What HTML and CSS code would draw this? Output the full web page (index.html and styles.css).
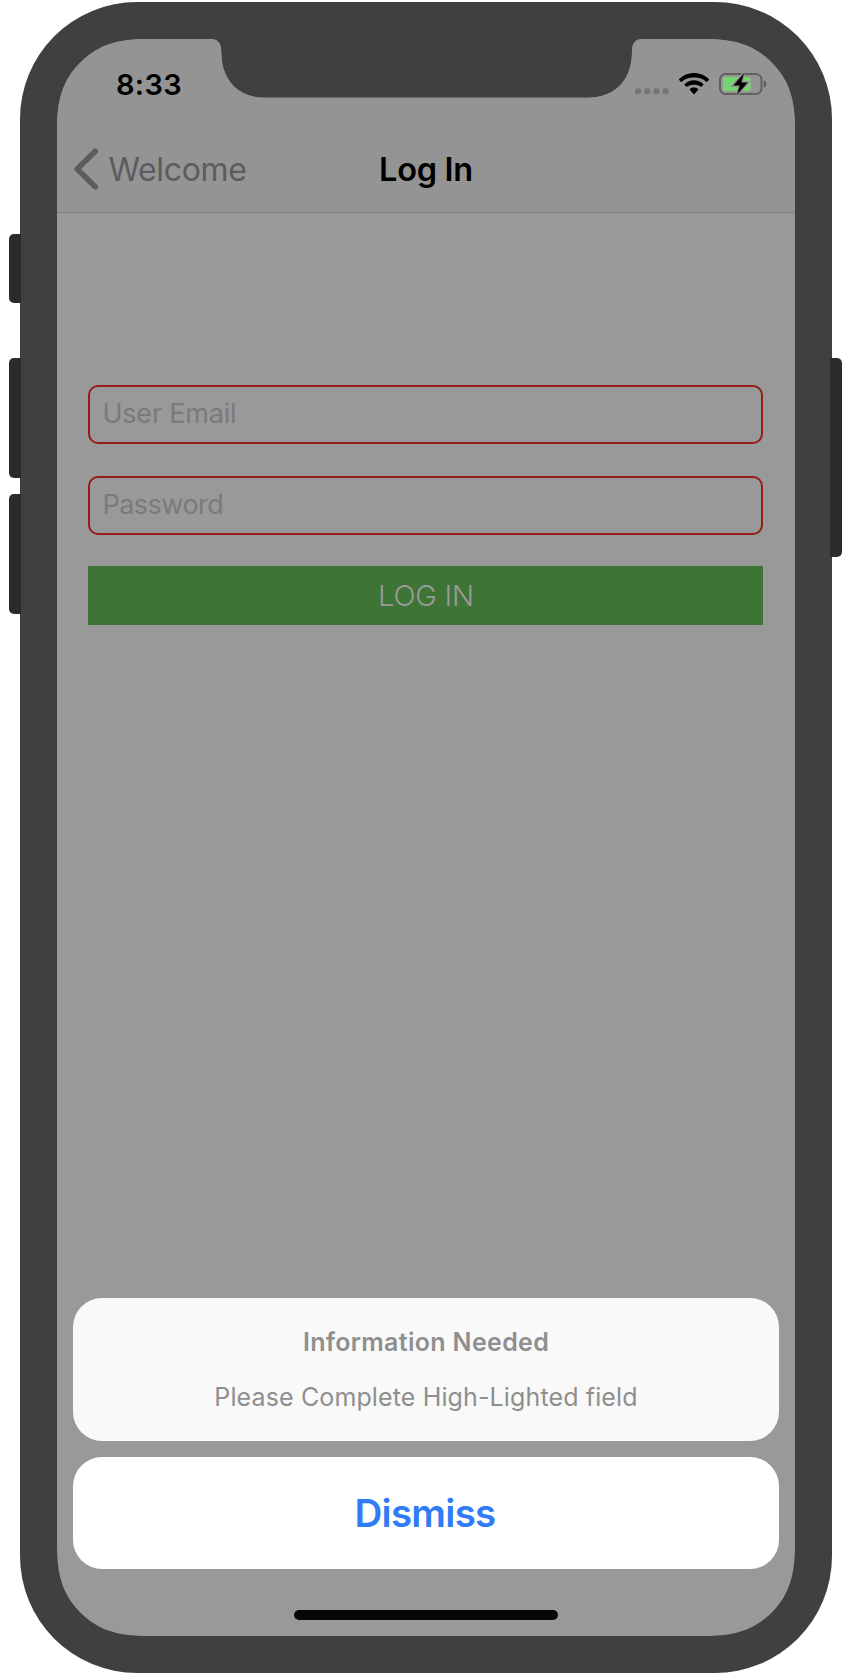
FILE: index.html
```html
<!DOCTYPE html>
<html lang="en">
<head>
<meta charset="utf-8">
<title>Log In</title>
<link rel="stylesheet" href="styles.css">
</head>
<body>
<div class="device">
  <i class="key key-mute"></i>
  <i class="key key-up"></i>
  <i class="key key-down"></i>
  <i class="key key-power"></i>
  <div class="shell">
    <main class="screen">
      <header class="top">
        <div class="status">
          <span class="time">8:33</span>
          <div class="indicators">
            <svg class="signal" width="34" height="7" viewBox="0 0 34 7"><g fill="#767676"><rect x="0" y="0.3" width="6" height="6" rx="2"/><rect x="9.2" y="0.3" width="6" height="6" rx="2"/><rect x="18.4" y="0.3" width="6" height="6" rx="2"/><rect x="27.6" y="0.3" width="6" height="6" rx="2"/></g></svg>
            <svg class="wifi" width="30" height="22" viewBox="0 0 30 22"><path d="M15 0C9.300 0 4 2.200.2 6.100a.7.7 0 0 0 0 1l1.600 1.600a.7.7 0 0 0 1 0A17.500 17.500 0 0 1 15 4.600a17.500 17.500 0 0 1 12.200 4.100.7.7 0 0 0 1 0l1.600-1.600a.7.7 0 0 0 0-1C26 2.200 20.700 0 15 0Z"/><path d="M15 7.200c-3.600 0-6.800 1.400-9.300 3.700a.7.7 0 0 0 0 1l1.700 1.700a.7.7 0 0 0 1 0A9.700 9.700 0 0 1 15 11.800c2.500 0 4.800.6 6.600 1.800a.7.7 0 0 0 1 0l1.700-1.700a.7.7 0 0 0 0-1A13.500 13.500 0 0 0 15 7.200Z"/><path d="M15 14.600c-1.500 0-2.900.5-4 1.400a.7.7 0 0 0 0 1.100l3.500 3.800a.7.7 0 0 0 1 0l3.500-3.800a.7.7 0 0 0 0-1.100 6.300 6.300 0 0 0-4-1.400Z"/></svg>
            <svg class="battery" width="49" height="24" viewBox="0 0 49 24"><rect x="1" y="2" width="41.500" height="20" rx="5.500" fill="none" stroke="#606060" stroke-width="2"/><path d="M44.700 8.200c2 .7 2.800 2 2.800 3.800s-.8 3.100-2.800 3.800Z" fill="#606060"/><rect x="4" y="5" width="27.500" height="14" rx="2.600" fill="#76d572"/><path d="M24.500 2 14.700 13.200h6.300L18.500 22 28.300 10.800H22Z" fill="#959595" stroke="#959595" stroke-width="3.400"/><path d="M24.500 2 14.700 13.200h6.300L18.500 22 28.300 10.800H22Z" stroke="#000" stroke-width=".5"/></svg>
          </div>
        </div>
        <nav class="nav">
          <a class="back"><svg width="26" height="42" viewBox="0 0 26 42"><path d="M22.200 3.200 4.200 21l18 17.800" fill="none" stroke="#5c5c5c" stroke-width="5.600" stroke-linecap="round" stroke-linejoin="round"/></svg><span>Welcome</span></a>
          <h1 class="title">Log In</h1>
        </nav>
      </header>
      <form class="form">
        <div class="field">User Email</div>
        <div class="field field-password">Password</div>
        <div class="submit">LOG IN</div>
      </form>
      <section class="sheet">
        <div class="message">
          <h2>Information Needed</h2>
          <p>Please Complete High-Lighted field</p>
        </div>
        <div class="dismiss">Dismiss</div>
      </section>
      <div class="home"></div>
    </main>
  </div>
</div>
</body>
</html>
```
FILE: styles.css
```css
* { box-sizing: border-box; }
body { margin: 0; background: #fff; font-family: Inter, "Liberation Sans", sans-serif; }
.device { position: relative; width: 852px; height: 1676px; padding: 2px 20px 3px; }
.shell { height: 1671px; padding: 37px; background: #404040; border-radius: 117px; }
.key { position: absolute; left: 9px; width: 12px; background: #2b2b2b; border-radius: 5px 0 0 5px; }
.key-mute { top: 234px; height: 69px; }
.key-up { top: 358px; height: 120px; }
.key-down { top: 494px; height: 120px; }
.key-power { left: 830px; top: 358px; border-radius: 0 5px 5px 0; height: 199px; }
.screen {
  display: flex; flex-direction: column; width: 738px; height: 1597px; background: #999;
  clip-path: path("M0 92C0 72 2 57 9 43C16 29 29 16 43 9C57 2 72 0 92 0H153C161 0 164.300 4 164.300 13C164.300 40 180 58.700 208 58.700H531C559 58.700 575 40 575 13C575 4 578 0 586 0H646C666 0 681 2 695 9C709 16 722 29 729 43C736 57 738 72 738 92V1505C738 1525 736 1540 729 1554C722 1568 709 1581 695 1588C681 1595 666 1597 646 1597H92C72 1597 57 1595 43 1588C29 1581 16 1568 9 1554C2 1540 0 1525 0 1505Z");
}
.top { height: 174px; background: #949494; border-bottom: 1px solid #7f7f7f; }
.status { display: flex; justify-content: space-between; height: 87px; padding: 26px 27px 0 59px; }
.time { font-size: 29px; line-height: 39px; font-weight: 600; letter-spacing: 0.3px; }
.indicators { display: flex; align-items: flex-start; }
.signal { margin: 23px 10px 0 0; }
.wifi { margin: 8px 10px 0 0; }
.battery { margin-top: 7px; }
.nav { display: grid; grid-template-columns: 1fr auto 1fr; align-items: center; height: 86px; }
.back { display: flex; align-items: center; gap: 9.500px; padding-left: 16px; font-size: 32px; letter-spacing: -0.35px; color: #5c5c5c; }
.title { margin: 0; font-size: 32.500px; font-weight: 600; letter-spacing: -0.3px; }
.form { display: flex; flex-direction: column; gap: 31.500px; padding: 172px 31.600px 0 31.400px; }
.field { height: 59px; padding: 0 12px; border: 2px solid #961c16; border-radius: 10px; font-size: 27px; line-height: 53px; letter-spacing: -0.2px; color: #7a7a7c; }
.field-password { letter-spacing: -0.5px; }
.submit { height: 59px; background: #3e7435; color: #9a9a9a; font-size: 29px; line-height: 59px; letter-spacing: -0.2px; text-align: center; font-weight: 350; }
.sheet { display: flex; flex-direction: column; gap: 16px; margin: auto 16px 41px; text-align: center; }
.message { height: 143px; padding-top: 24px; border-radius: 29px; background: #f9f9f9; color: #8f8f8f; }
.message h2, .message p { margin: 0; font-size: 25px; line-height: 40px; letter-spacing: 0.13px; }
.message h2 { font-weight: 600; letter-spacing: 0.33px; }
.message p { margin-top: 15px; }
.dismiss { height: 112px; padding-right: 2px; border-radius: 29px; background: #fff; color: #307cf7; font-size: 38.500px; font-weight: 600; line-height: 113px; letter-spacing: -0.7px; }
.home { width: 264px; height: 10px; margin: 0 auto 16px; border-radius: 5px; background: #070707; }
```
